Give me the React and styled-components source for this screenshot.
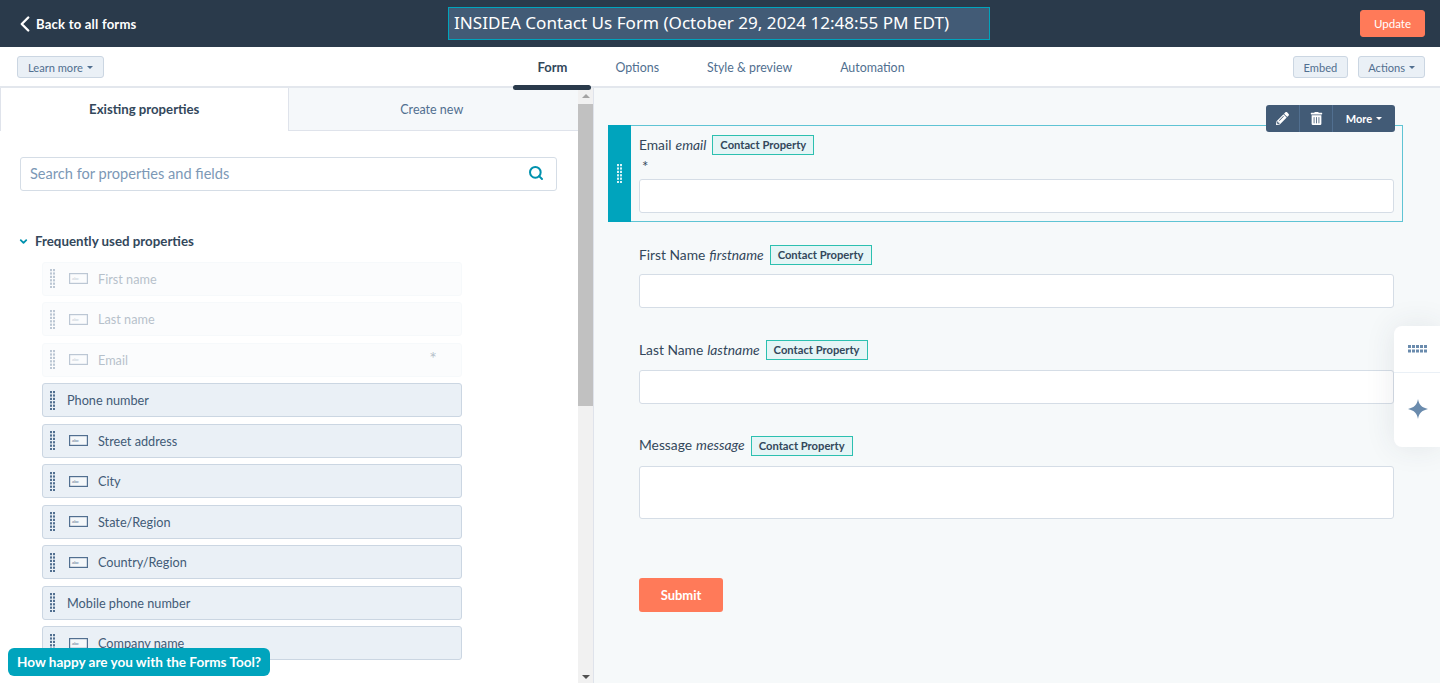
import React from 'react';
import styled, { createGlobalStyle } from 'styled-components';
import { ChevronLeft, ChevronDown, Search } from 'lucide-react';
import { FaPencilAlt, FaTrashAlt } from 'react-icons/fa';

const FONT = `Lato, "Noto Sans", "Liberation Sans", sans-serif`;

const Global = createGlobalStyle`
  html, body { margin: 0; padding: 0; }
  body { font-family: ${FONT}; color: #33475b; background: #fff; }
  * { box-sizing: border-box; }
`;

const Page = styled.div`
  position: relative;
  width: 1440px;
  height: 683px;
  overflow: hidden;
  display: flex;
  flex-direction: column;
`;

const Header = styled.header`
  height: 47px;
  flex: none;
  background: #2a3a4b;
  display: grid;
  grid-template-columns: 1fr 542px 1fr;
  align-items: center;
  padding: 0 15px 0 19px;
`;

const BackLink = styled.a`
  display: flex;
  align-items: center;
  color: #fff;
  font-weight: 700;
  font-size: 13.1px;
  letter-spacing: 0.2px;

  svg { margin: 0 -2px 0 -7px; }
`;

const TitleBox = styled.div`
  height: 33px;
  margin: 0 3px 0 -3px;
  background: #425b76;
  border: 1.5px solid #00a4bd;
  color: #fff;
  font-family: "Noto Sans", sans-serif;
  font-size: 17.1px;
  line-height: 30px;
  padding-left: 5px;
  white-space: nowrap;
`;

const Update = styled.button`
  justify-self: end;
  width: 65px;
  height: 27px;
  background: #ff7a59;
  border: 1px solid #ff7a59;
  border-radius: 3px;
  color: #fff;
  font-family: ${FONT};
  font-size: 11.5px;
`;

const SubBar = styled.div`
  height: 41px;
  flex: none;
  background: #fff;
  border-bottom: 2px solid #e3e7ed;
  display: grid;
  grid-template-columns: 1fr auto 1fr;
  padding: 0 15px 0 17px;
  align-items: start;
`;

const GreyButton = styled.button`
  height: 22px;
  padding: 0 ${p => p.$pad || 10}px;
  background: #eaf0f6;
  border: 1px solid #cbd6e2;
  border-radius: 3px;
  color: #516f90;
  font-family: ${FONT};
  font-size: 11.1px;
  display: inline-flex;
  align-items: center;
  gap: 4px;
  margin-top: 9px;
`;

const Caret = styled.span`
  width: 0;
  height: 0;
  border-left: 3px solid transparent;
  border-right: 3px solid transparent;
  border-top: 3px solid ${p => p.$color || '#516f90'};
`;

const Nav = styled.nav`
  display: flex;
  height: 41px;
`;

const NavTab = styled.a`
  position: relative;
  padding: 0 24px;
  height: 41px;
  line-height: 41px;
  font-size: ${p => (p.$active ? 13 : 12.4)}px;
  color: ${p => (p.$active ? '#33475b' : '#516f90')};
  font-weight: ${p => (p.$active ? 700 : 400)};
  ${p => p.$active && `
    &::after {
      content: '';
      position: absolute;
      left: 0;
      right: 0;
      bottom: -2px;
      height: 5px;
      background: #2a3a4b;
      border-radius: 3px;
    }
  `}
`;

const RightActions = styled.div`
  justify-self: end;
  display: flex;
  gap: 10px;
`;

const Body = styled.div`
  flex: 1;
  display: flex;
  min-height: 0;
`;

const LeftPanel = styled.aside`
  width: 578px;
  flex: none;
  overflow: hidden;
  background: #fff;
`;

const Tabs = styled.div`
  display: flex;
  height: 43px;
`;

const Tab = styled.div`
  flex: 1;
  display: flex;
  align-items: center;
  justify-content: center;
  font-size: ${p => (p.$active ? 13.2 : 12.5)}px;
  font-weight: ${p => (p.$active ? 700 : 400)};
  color: ${p => (p.$active ? '#33475b' : '#516f90')};
  background: ${p => (p.$active ? '#fff' : '#f5f8fa')};
  border-left: 1px solid #dfe3eb;
  border-bottom: ${p => (p.$active ? 'none' : '1px solid #dfe3eb')};
  padding: ${p => (p.$active ? '0 0 1px' : '0 3px 0 0')};
`;

const SearchBox = styled.div`
  margin: 26px 21px 0 20px;
  height: 34px;
  border: 1px solid #d5dde6;
  border-radius: 3px;
  display: flex;
  align-items: center;
  justify-content: space-between;
  padding: 0 12px 2px 9px;
  font-size: 14.6px;
  color: #7c98b6;
  background: #fff;
`;

const GroupHead = styled.div`
  margin: 42px 0 0 18px;
  display: flex;
  align-items: center;
  gap: 6px;
  height: 16px;
  font-size: 13.3px;
  font-weight: 700;
  color: #33475b;
`;

const List = styled.div`
  margin: 12.5px 0 0 42px;
  width: 420px;
  display: flex;
  flex-direction: column;
  gap: 6.5px;
`;

const Row = styled.div`
  position: relative;
  height: 34px;
  flex: none;
  display: flex;
  align-items: center;
  padding-left: 7px;
  background: #eaf0f6;
  border: 1px solid #cbd6e2;
  border-radius: 3px;
  font-size: 12.7px;
  color: #425b76;
  opacity: ${p => (p.$off ? 0.38 : 1)};
  ${p => p.$off && 'background: #f5f8fa; border-color: #eaf0f6;'}
`;

const RowText = styled.span`
  margin-left: ${p => (p.$plain ? 12 : 10)}px;
  padding-top: 0.5px;
`;

const Required = styled.span`
  margin-left: auto;
  margin-right: 24px;
  margin-top: -3px;
  font-size: 18px;
  line-height: 18px;
`;

const HandleSvg = styled.svg`
  flex: none;
  display: block;
`;

const Handle = ({ color = '#516f90' }) => {
  const dots = [];
  for (let y = 0; y < 6; y++) {
    for (let x = 0; x < 2; x++) {
      dots.push(<rect key={`${x}-${y}`} x={x * 3} y={y * 3.4} width="2" height="2.2" fill={color} />);
    }
  }
  return (
    <HandleSvg width="5" height="19" viewBox="0 0 5 19">
      {dots}
    </HandleSvg>
  );
};

const TextIcon = styled.svg`
  flex: none;
  margin-left: 14px;
`;

const AbcIcon = () => (
  <TextIcon width="19" height="11" viewBox="0 0 19 11">
    <rect x="0.6" y="0.6" width="17.8" height="9.8" fill="#f5f8fa" stroke="#516f90" strokeWidth="1.2" />
    <text x="3" y="7" fontSize="4.5" fill="#516f90" fontFamily="Lato, sans-serif">abc</text>
  </TextIcon>
);

const Scrollbar = styled.div`
  width: 15px;
  flex: none;
  background: #f1f1f1;
  display: flex;
  flex-direction: column;
  align-items: center;
`;

const ScrollUp = styled.span`
  margin-top: 6px;
  border-left: 4px solid transparent;
  border-right: 4px solid transparent;
  border-bottom: 4px solid #a3a3a3;
`;

const ScrollThumb = styled.div`
  width: 15px;
  height: 302px;
  margin-top: 6px;
  background: #c1c1c1;
`;

const ScrollDown = styled.span`
  margin-top: auto;
  margin-bottom: 4px;
  border-left: 4px solid transparent;
  border-right: 4px solid transparent;
  border-top: 4px solid #505050;
`;

const Canvas = styled.main`
  flex: 1;
  min-width: 0;
  background: #f6f9fa;
  border-left: 1px solid #dfe3eb;
  padding: 37px 37px 0 14px;
`;

const Field = styled.div`
  position: relative;
  padding: 10px 9px 8px 31px;
  margin-bottom: 14px;
  ${p => p.$selected && `
    padding: 9px 8px 8px 30px;
    margin-bottom: 13px;
    border: 1px solid #5fc4d4;
  `}
`;

const DragBar = styled.div`
  position: absolute;
  left: -1px;
  top: -1px;
  bottom: -1px;
  width: 23px;
  background: #00a4bd;
  display: flex;
  align-items: center;
  justify-content: center;
`;

const LabelRow = styled.div`
  display: flex;
  align-items: center;
  gap: 6px;
  height: 20px;
  font-size: 13.8px;
  color: #33475b;
  margin-bottom: ${p => p.$gap}px;
`;

const LabelName = styled.span`
  margin-top: -2px;
`;

const LabelKey = styled.em`
  margin: -2px 0 0 -2px;
`;

const Tag = styled.span`
  height: 20px;
  padding: 0 7px;
  border: 1px solid #2cc0b0;
  background: #e5f5f6;
  font-size: 11.2px;
  font-weight: 700;
  line-height: 18px;
  white-space: nowrap;
`;

const Star = styled.div`
  height: 24px;
  padding: 3px 0 0 3px;
  font-size: 15px;
  line-height: 16px;
`;

const Input = styled.div`
  height: ${p => p.$h}px;
  background: #fff;
  border: 1px solid #d5dde6;
  border-radius: 3px;
`;

const Submit = styled.button`
  display: block;
  margin: 51px 0 0 31px;
  width: 84px;
  height: 34px;
  background: #ff7a59;
  border: 0;
  border-radius: 3px;
  color: #fff;
  font-family: ${FONT};
  font-weight: 700;
  font-size: 13px;
`;

const Toolbar = styled.div`
  position: absolute;
  top: -21px;
  right: 7px;
  width: 129px;
  height: 27px;
  display: flex;
  background: #425b76;
  border-radius: 3px;
  color: #fff;
`;

const ToolCell = styled.div`
  width: ${p => p.$w}px;
  display: flex;
  align-items: center;
  justify-content: center;
  gap: 4px;
  font-size: 11px;
  font-weight: 700;
  & + & { border-left: 1px solid #516f90; }
`;

const SidePanel = styled.div`
  position: absolute;
  right: 0;
  top: 326px;
  width: 46px;
  height: 121px;
  background: #fff;
  border-radius: 8px 0 0 8px;
  box-shadow: 0 0 30px rgba(45, 62, 80, 0.1);
  display: flex;
  flex-direction: column;
`;

const SideCell = styled.div`
  flex: ${p => p.$grow};
  display: flex;
  align-items: center;
  justify-content: center;
  & + & { border-top: 1px solid #eaf0f6; }

  svg { margin: ${p => p.$iconMargin || 0}; }
`;

const Feedback = styled.div`
  position: absolute;
  left: 8px;
  top: 648px;
  width: 262px;
  height: 28px;
  background: #00a4bd;
  border-radius: 6px;
  color: #fff;
  font-size: 13.55px;
  font-weight: 700;
  line-height: 28px;
  padding-left: 9px;
`;

const rows = [
  { label: 'First name', off: true, icon: true },
  { label: 'Last name', off: true, icon: true },
  { label: 'Email', off: true, icon: true, required: true },
  { label: 'Phone number' },
  { label: 'Street address', icon: true },
  { label: 'City', icon: true },
  { label: 'State/Region', icon: true },
  { label: 'Country/Region', icon: true },
  { label: 'Mobile phone number' },
  { label: 'Company name', icon: true },
];

const fields = [
  { name: 'First Name', key: 'firstname', gap: 9, h: 34 },
  { name: 'Last Name', key: 'lastname', gap: 10, h: 33.5 },
  { name: 'Message', key: 'message', gap: 10, h: 53 },
];

export default function App() {
  return (
    <Page>
      <Global />
      <Header>
        <BackLink>
          <ChevronLeft size={26} color="#fff" strokeWidth={2.2} />
          Back to all forms
        </BackLink>
        <TitleBox>INSIDEA Contact Us Form (October 29, 2024 12:48:55 PM EDT)</TitleBox>
        <Update>Update</Update>
      </Header>
      <SubBar>
        <div>
          <GreyButton>Learn more <Caret /></GreyButton>
        </div>
        <Nav>
          <NavTab $active>Form</NavTab>
          <NavTab>Options</NavTab>
          <NavTab>Style &amp; preview</NavTab>
          <NavTab>Automation</NavTab>
        </Nav>
        <RightActions>
          <GreyButton $pad={10}>Embed</GreyButton>
          <GreyButton $pad={9}>Actions <Caret /></GreyButton>
        </RightActions>
      </SubBar>
      <Body>
        <LeftPanel>
          <Tabs>
            <Tab $active>Existing properties</Tab>
            <Tab>Create new</Tab>
          </Tabs>
          <SearchBox>
            Search for properties and fields
            <Search size={16} color="#0091ae" strokeWidth={3} />
          </SearchBox>
          <GroupHead>
            <ChevronDown size={11} color="#0091ae" strokeWidth={4} />
            Frequently used properties
          </GroupHead>
          <List>
            {rows.map(r => (
              <Row key={r.label} $off={r.off}>
                <Handle />
                {r.icon && <AbcIcon />}
                <RowText $plain={!r.icon}>{r.label}</RowText>
                {r.required && <Required>*</Required>}
              </Row>
            ))}
          </List>
        </LeftPanel>
        <Scrollbar>
          <ScrollUp />
          <ScrollThumb />
          <ScrollDown />
        </Scrollbar>
        <Canvas>
          <Field $selected>
            <DragBar><Handle color="#d9f3f7" /></DragBar>
            <Toolbar>
              <ToolCell $w={33}><FaPencilAlt size={13} /></ToolCell>
              <ToolCell $w={33}><FaTrashAlt size={13} /></ToolCell>
              <ToolCell $w={63}>More <Caret $color="#fff" /></ToolCell>
            </Toolbar>
            <LabelRow $gap={0}>
              <LabelName>Email</LabelName> <LabelKey>email</LabelKey>
              <Tag>Contact Property</Tag>
            </LabelRow>
            <Star>*</Star>
            <Input $h={34} />
          </Field>
          {fields.map(f => (
            <Field key={f.key}>
              <LabelRow $gap={f.gap}>
                <LabelName>{f.name}</LabelName> <LabelKey>{f.key}</LabelKey>
                <Tag>Contact Property</Tag>
              </LabelRow>
              <Input $h={f.h} />
            </Field>
          ))}
          <Submit>Submit</Submit>
        </Canvas>
      </Body>
      <SidePanel>
        <SideCell $grow={46}>
          <svg width="19" height="8" viewBox="0 0 19 8">
            {[0, 1].map(y => [0, 1, 2, 3, 4].map(x => (
              <rect key={`${x}${y}`} x={x * 4} y={y * 4.5} width="3" height="3" fill="#6a8bad" />
            )))}
          </svg>
        </SideCell>
        <SideCell $grow={75} $iconMargin="-2px 0 0 1px">
          <svg width="20" height="20" viewBox="0 0 20 20">
            <path d="M10 0 C11 5.5 13.5 8.5 20 10 C13.5 11.5 11 14.5 10 20 C9 14.5 6.5 11.5 0 10 C6.5 8.5 9 5.5 10 0 Z" fill="#6a8bad" />
          </svg>
        </SideCell>
      </SidePanel>
      <Feedback>How happy are you with the Forms Tool?</Feedback>
    </Page>
  );
}
